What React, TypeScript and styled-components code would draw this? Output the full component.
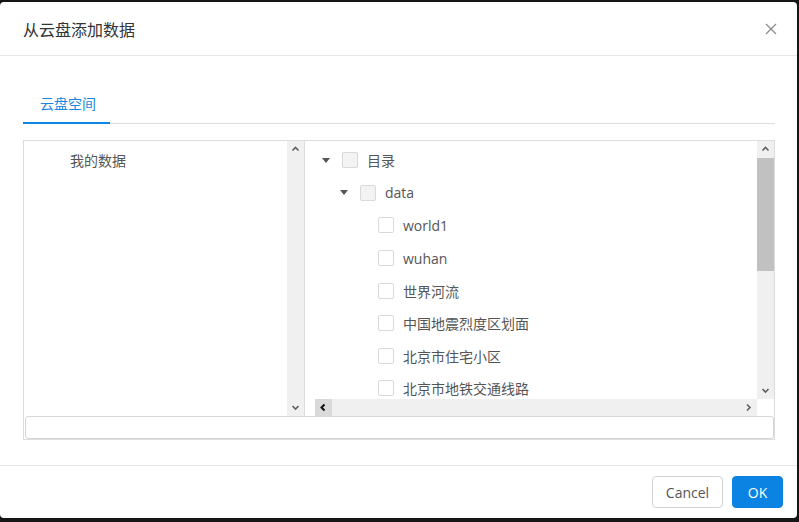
import React from 'react';
import styled, { createGlobalStyle } from 'styled-components';

const GlobalStyle = createGlobalStyle`
  body {
    margin: 0;
    background: #161616;
    font-family: "Open Sans", "Noto Sans CJK SC", sans-serif;
  }
`;

type TreeNode = { label: string; level: number; branch?: boolean };

const nodes: TreeNode[] = [
  { label: '目录', level: 0, branch: true },
  { label: 'data', level: 1, branch: true },
  { label: 'world1', level: 2 },
  { label: 'wuhan', level: 2 },
  { label: '世界河流', level: 2 },
  { label: '中国地震烈度区划面', level: 2 },
  { label: '北京市住宅小区', level: 2 },
  { label: '北京市地铁交通线路', level: 2 },
];

function Chevron({ dir, dark }: { dir: 'up' | 'down' | 'left' | 'right'; dark?: boolean }) {
  const paths = {
    up: 'M1.5 5.5 L4.5 2.5 L7.5 5.5',
    down: 'M1.5 3 L4.5 6 L7.5 3',
    left: 'M5.5 1.5 L2.5 4.5 L5.5 7.5',
    right: 'M3 1.5 L6 4.5 L3 7.5',
  };
  return (
    <svg width="9" height="9" viewBox="0 0 9 9">
      <path d={paths[dir]} fill="none" stroke={dark ? '#111' : '#606060'} strokeWidth={dark ? 2 : 1.6} />
    </svg>
  );
}

export default function App(): JSX.Element {
  return (
    <>
      <GlobalStyle />
      <Dialog>
        <Header>
          <Title>从云盘添加数据</Title>
          <svg width="12" height="12" viewBox="0 0 12 12">
            <path d="M1 1 L11 11 M11 1 L1 11" stroke="#8c8c8c" strokeWidth="1.3" />
          </svg>
        </Header>
        <Body>
          <TabBar>
            <Tab>云盘空间</Tab>
          </TabBar>
          <Box>
            <Panels>
              <LeftPanel>
                <List>
                  <ListItem>我的数据</ListItem>
                </List>
                <VScroll>
                  <ScrollButton><Chevron dir="up" /></ScrollButton>
                  <Track />
                  <ScrollButton><Chevron dir="down" /></ScrollButton>
                </VScroll>
              </LeftPanel>
              <RightPanel>
                <TreeRow>
                  <Tree>
                    {nodes.map((n) => (
                      <Node key={n.label} $level={n.level}>
                        <Caret>
                          {n.branch && (
                            <svg width="8" height="5" viewBox="0 0 8 5">
                              <path d="M0 0 L8 0 L4 5 Z" fill="#555" />
                            </svg>
                          )}
                        </Caret>
                        <Check $filled={!!n.branch} />
                        <NodeLabel>{n.label}</NodeLabel>
                      </Node>
                    ))}
                  </Tree>
                  <VScroll>
                    <ScrollButton><Chevron dir="up" /></ScrollButton>
                    <Thumb />
                    <Track />
                    <ScrollButton><Chevron dir="down" /></ScrollButton>
                  </VScroll>
                </TreeRow>
                <HRow>
                  <HScroll>
                    <HButton $active><Chevron dir="left" dark /></HButton>
                    <Track />
                    <HButton><Chevron dir="right" /></HButton>
                  </HScroll>
                  <Corner />
                </HRow>
              </RightPanel>
            </Panels>
            <Input />
          </Box>
        </Body>
        <Footer>
          <Button>Cancel</Button>
          <Button $primary>OK</Button>
        </Footer>
      </Dialog>
    </>
  );
}

const Dialog = styled.div`
  width: 797px;
  height: 516px;
  margin-top: 2px;
  background: #fff;
  border-radius: 4px;
  display: flex;
  flex-direction: column;
  overflow: hidden;
`;

const Header = styled.div`
  height: 53px;
  flex: none;
  border-bottom: 1px solid #e6e6e6;
  display: flex;
  align-items: center;
  justify-content: space-between;
  padding: 0 20px 0 23px;
`;

const Title = styled.h1`
  margin: 0;
  font-size: 16px;
  font-weight: normal;
  color: #333;
`;

const Body = styled.div`
  flex: 1;
  padding: 30px 22px 0 23px;
`;

const TabBar = styled.div`
  display: flex;
  border-bottom: 1px solid #dcdcdc;
`;

const Tab = styled.div`
  height: 36px;
  line-height: 36px;
  padding: 0 14px 0 17px;
  font-size: 14px;
  color: #1a86e0;
  border-bottom: 2px solid #0e84e3;
  margin-bottom: -1px;
`;

const Box = styled.div`
  margin-top: 16px;
  height: 298px;
  border: 1px solid #dcdcdc;
  display: flex;
  flex-direction: column;
`;

const Panels = styled.div`
  height: 275px;
  display: flex;
`;

const LeftPanel = styled.div`
  width: 280px;
  border-right: 1px solid #dcdcdc;
  display: flex;
`;

const List = styled.div`
  flex: 1;
  padding: 10px 0 0 46px;
`;

const ListItem = styled.div`
  font-size: 14px;
  line-height: 19px;
  color: #555;
`;

const VScroll = styled.div`
  width: 17px;
  background: #f0f0f0;
  display: flex;
  flex-direction: column;
`;

const ScrollButton = styled.div`
  height: 17px;
  flex: none;
  display: flex;
  align-items: center;
  justify-content: center;
`;

const Track = styled.div`
  flex: 1;
`;

const Thumb = styled.div`
  height: 113px;
  flex: none;
  background: #c1c1c1;
`;

const RightPanel = styled.div`
  flex: 1;
  display: flex;
  flex-direction: column;
`;

const TreeRow = styled.div`
  flex: 1;
  display: flex;
  min-height: 0;
`;

const Tree = styled.div`
  flex: 1;
  overflow: hidden;
  padding: 3px 0 0 16px;
`;

const Node = styled.div<{ $level: number }>`
  height: 32.6px;
  display: flex;
  align-items: center;
  padding-left: ${(p) => p.$level * 18}px;
`;

const Caret = styled.span`
  width: 20px;
  display: flex;
  align-items: center;
  padding-left: 1px;
`;

const Check = styled.span<{ $filled: boolean }>`
  width: 14px;
  height: 14px;
  border: 1px solid #d9d9d9;
  border-radius: 2px;
  background: ${(p) => (p.$filled ? '#f3f3f3' : '#fff')};
  margin-right: 9px;
`;

const NodeLabel = styled.span`
  font-size: 14px;
  color: #555;
  white-space: nowrap;
`;

const HRow = styled.div`
  height: 17px;
  display: flex;
  padding-left: 10px;
`;

const HScroll = styled.div`
  flex: 1;
  display: flex;
  background: #f0f0f0;
`;

const HButton = styled.div<{ $active?: boolean }>`
  width: 17px;
  display: flex;
  align-items: center;
  justify-content: center;
  background: ${(p) => (p.$active ? '#dadada' : 'transparent')};
`;

const Corner = styled.div`
  width: 17px;
  background: #fff;
`;

const Input = styled.div`
  height: 21px;
  margin: 0 0 0 1px;
  border: 1px solid #d6d6d6;
  border-radius: 3px;
`;

const Footer = styled.div`
  height: 52px;
  flex: none;
  border-top: 1px solid #e6e6e6;
  display: flex;
  align-items: center;
  justify-content: flex-end;
  gap: 9px;
  padding-right: 14px;
`;

const Button = styled.button<{ $primary?: boolean }>`
  height: 32px;
  padding: 0 12px;
  min-width: ${(p) => (p.$primary ? '51px' : '71px')};
  border-radius: 4px;
  font-family: "Open Sans", sans-serif;
  font-size: 14px;
  border: 1px solid ${(p) => (p.$primary ? '#0b83e2' : '#d3d3d3')};
  background: ${(p) => (p.$primary ? '#0b83e2' : '#fff')};
  color: ${(p) => (p.$primary ? '#fff' : '#555')};
`;
